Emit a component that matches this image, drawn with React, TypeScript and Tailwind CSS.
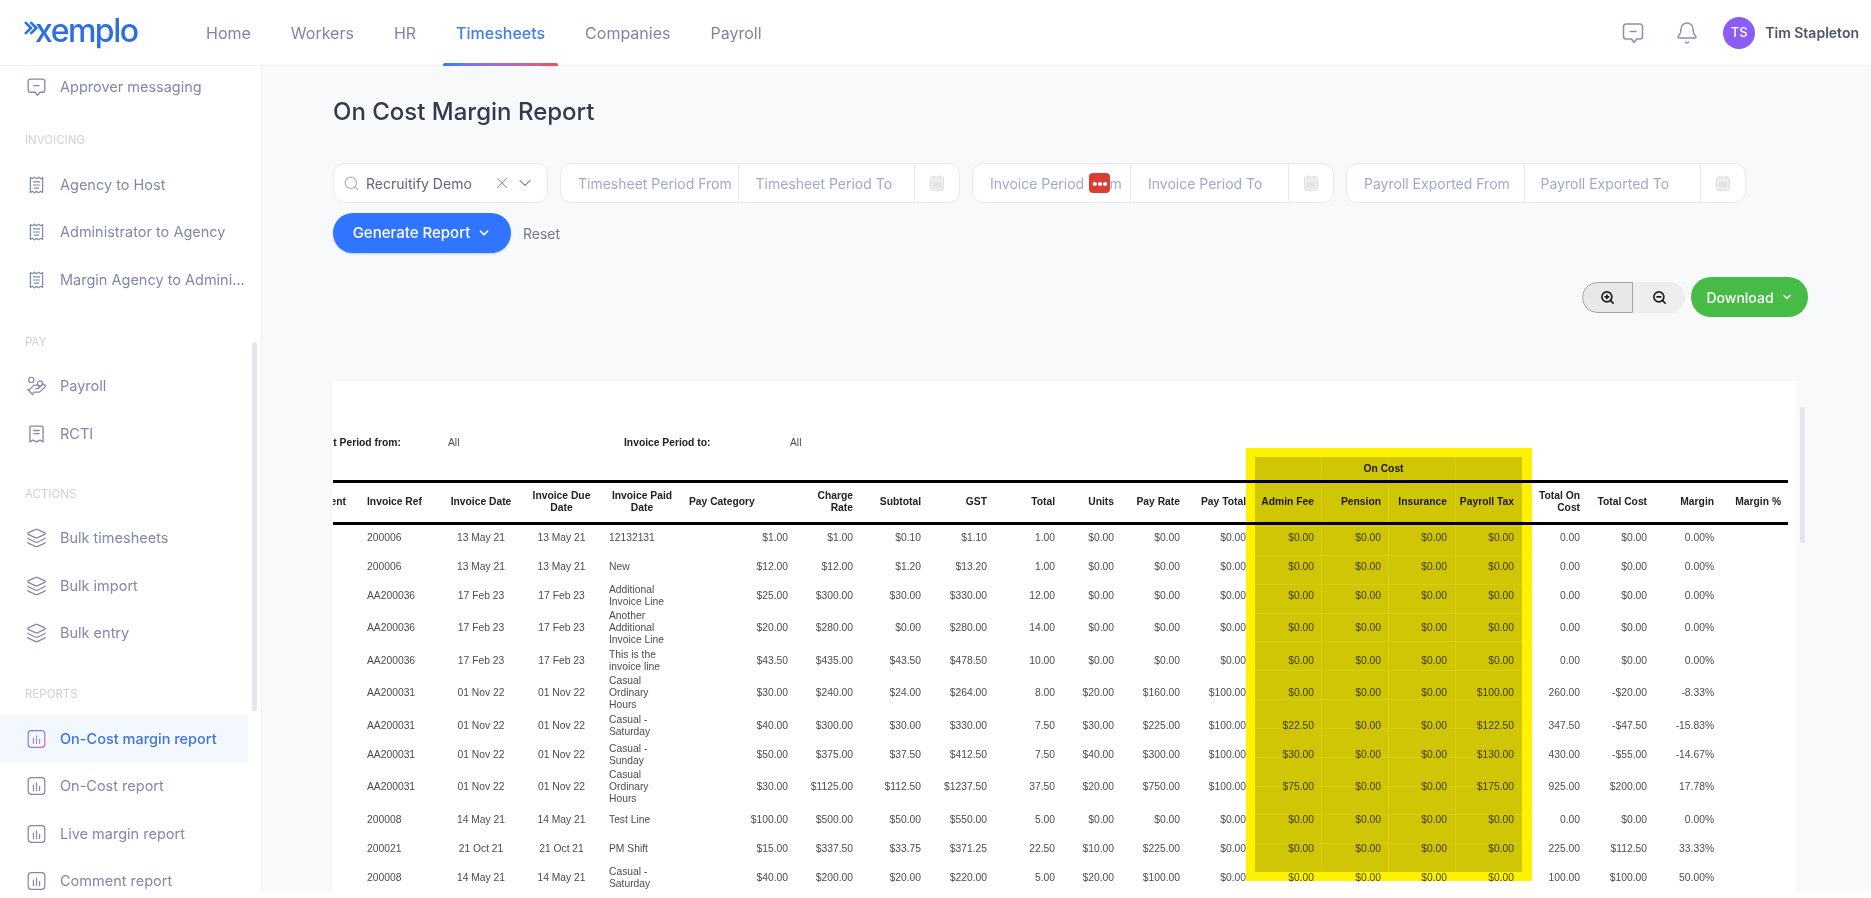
import { Bell, ChevronDown, HandCoins, Layers, Search, X, ZoomIn, ZoomOut } from "lucide-react";

const MessageIcon = ({ className = "" }: { className?: string }) => (
  <svg viewBox="0 0 24 24" fill="none" stroke="currentColor" strokeWidth="1.5" strokeLinejoin="round" strokeLinecap="round" className={className}>
    <path d="M5 3h14a2.5 2.5 0 0 1 2.5 2.5v10A2.5 2.5 0 0 1 19 18h-3.2L13 21.5 10.5 18H5a2.5 2.5 0 0 1-2.5-2.5v-10A2.5 2.5 0 0 1 5 3Z" />
    <path d="M9 10.5h6" />
  </svg>
);

const ClipIcon = () => (
  <svg viewBox="0 0 24 24" fill="none" stroke="currentColor" strokeWidth="1.4" strokeLinejoin="round" strokeLinecap="round" className="h-[24px] w-[24px]">
    <path d="M5 3.5 7.3 4.8 9.6 3 12 4.8 14.4 3l2.3 1.8L19 3.5v17l-2.3-1.3-2.3 1.8-2.4-1.8L9.6 21l-2.3-1.8L5 20.5Z" />
    <path d="M8.5 8.5h7M8.5 12h7M9.5 15.5h5" />
  </svg>
);

const RctiIcon = () => (
  <svg viewBox="0 0 24 24" fill="none" stroke="currentColor" strokeWidth="1.5" strokeLinejoin="round" strokeLinecap="round" className="h-[24px] w-[24px]">
    <path d="M6 3h12a1.5 1.5 0 0 1 1.5 1.5V21l-3.5-2-4 2-4-2-3.5 2V4.500A1.500 1.500 0 0 1 6 3Z" />
    <path d="M9 8h6M9 11.500h6" />
  </svg>
);

const ChartIcon = ({ active = false }: { active?: boolean }) => (
  <svg viewBox="0 0 24 24" fill="none" strokeWidth="1.4" strokeLinecap="round" stroke={active ? "url(#activeChart)" : "currentColor"} className="h-[24px] w-[24px]">
    {active && (
      <defs>
        <linearGradient id="activeChart" x1="0" y1="0" x2="1" y2="1">
          <stop offset="0" stopColor="#5b8cf0" />
          <stop offset="0.6" stopColor="#a07be0" />
          <stop offset="1" stopColor="#f0606a" />
        </linearGradient>
      </defs>
    )}
    <rect x="2.500" y="2.500" width="19" height="19" rx="3.500" stroke={active ? "url(#activeChart)" : "currentColor"} />
    <path d="M8.500 11v6M12 8.500V17M15.500 12.500V17" stroke={active ? "#a78ee0" : "currentColor"} />
  </svg>
);

const CalendarIcon = () => (
  <svg viewBox="0 0 14 16" className="h-[16px] w-[14px]" fill="none">
    <rect x="0.500" y="2" width="13" height="13.500" rx="2" fill="#eceef0" stroke="#dfe1e5" />
    <rect x="3" y="0.500" width="1.500" height="3" fill="#dfe1e5" />
    <rect x="9.500" y="0.500" width="1.500" height="3" fill="#dfe1e5" />
    <rect x="3" y="7" width="8" height="5.500" fill="#e2e4e8" />
  </svg>
);

function NavRow({ label, icon, active = false }: { label: string; icon: React.ReactNode; active?: boolean }) {
  return (
    <div className={`flex h-[47.500px] items-center pl-[26px] text-[14.500px] ${active ? "w-[248px] bg-[#f3f7fe] font-medium text-[#3f74e0]" : "text-[#8288a9]"}`}>
      <span className="mr-[13px] flex w-[21px] items-center justify-center">{icon}</span>
      <span className="whitespace-nowrap">{label}</span>
    </div>
  );
}

const SectionLabel = ({ text, className }: { text: string; className: string }) => (
  <div className={`flex items-end pb-[14px] pl-[25px] text-[11.500px] leading-[14px] text-[#ccd0e0] ${className}`}>{text}</div>
);

const Seg = ({ text, className }: { text: string; className: string }) => (
  <div className={`flex h-full items-center overflow-hidden border-r border-[#e6e8f2] ${className}`}>
    <span className="whitespace-nowrap text-[14px] text-[#a3a9c7]">{text}</span>
  </div>
);

const CalSeg = ({ className }: { className: string }) => (
  <div className={`flex h-full items-center justify-center ${className}`}>
    <CalendarIcon />
  </div>
);

const groupClass = "flex h-full items-center rounded-[11px] border border-[#e8eaf3] bg-white";

const widths = [77, 81, 80, 81, 80, 113, 65, 68, 66, 68, 59, 66, 66, 68, 67, 66, 67, 66, 67, 67, 67];
const heads = [
  "Agent", "Invoice Ref", "Invoice Date", "Invoice Due Date", "Invoice Paid Date", "Pay Category", "Charge Rate", "Subtotal", "GST", "Total", "Units",
  "Pay Rate", "Pay Total", "Admin Fee", "Pension", "Insurance", "Payroll Tax", "Total On Cost", "Total Cost", "Margin", "Margin %",
];

const rows = [
  ["200006", "13 May 21", "13 May 21", "12132131", "$1.00", "$1.00", "$0.10", "$1.10", "1.00", "$0.00", "$0.00", "$0.00", "$0.00", "$0.00", "$0.00", "$0.00", "0.00", "$0.00", "0.00%"],
  ["200006", "13 May 21", "13 May 21", "New", "$12.00", "$12.00", "$1.20", "$13.20", "1.00", "$0.00", "$0.00", "$0.00", "$0.00", "$0.00", "$0.00", "$0.00", "0.00", "$0.00", "0.00%"],
  ["AA200036", "17 Feb 23", "17 Feb 23", "Additional Invoice Line", "$25.00", "$300.00", "$30.00", "$330.00", "12.00", "$0.00", "$0.00", "$0.00", "$0.00", "$0.00", "$0.00", "$0.00", "0.00", "$0.00", "0.00%"],
  ["AA200036", "17 Feb 23", "17 Feb 23", "Another Additional Invoice Line", "$20.00", "$280.00", "$0.00", "$280.00", "14.00", "$0.00", "$0.00", "$0.00", "$0.00", "$0.00", "$0.00", "$0.00", "0.00", "$0.00", "0.00%"],
  ["AA200036", "17 Feb 23", "17 Feb 23", "This is the invoice line", "$43.50", "$435.00", "$43.50", "$478.50", "10.00", "$0.00", "$0.00", "$0.00", "$0.00", "$0.00", "$0.00", "$0.00", "0.00", "$0.00", "0.00%"],
  ["AA200031", "01 Nov 22", "01 Nov 22", "Casual Ordinary Hours", "$30.00", "$240.00", "$24.00", "$264.00", "8.00", "$20.00", "$160.00", "$100.00", "$0.00", "$0.00", "$0.00", "$100.00", "260.00", "-$20.00", "-8.33%"],
  ["AA200031", "01 Nov 22", "01 Nov 22", "Casual - Saturday", "$40.00", "$300.00", "$30.00", "$330.00", "7.50", "$30.00", "$225.00", "$100.00", "$22.50", "$0.00", "$0.00", "$122.50", "347.50", "-$47.50", "-15.83%"],
  ["AA200031", "01 Nov 22", "01 Nov 22", "Casual - Sunday", "$50.00", "$375.00", "$37.50", "$412.50", "7.50", "$40.00", "$300.00", "$100.00", "$30.00", "$0.00", "$0.00", "$130.00", "430.00", "-$55.00", "-14.67%"],
  ["AA200031", "01 Nov 22", "01 Nov 22", "Casual Ordinary Hours", "$30.00", "$1125.00", "$112.50", "$1237.50", "37.50", "$20.00", "$750.00", "$100.00", "$75.00", "$0.00", "$0.00", "$175.00", "925.00", "$200.00", "17.78%"],
  ["200008", "14 May 21", "14 May 21", "Test Line", "$100.00", "$500.00", "$50.00", "$550.00", "5.00", "$0.00", "$0.00", "$0.00", "$0.00", "$0.00", "$0.00", "$0.00", "0.00", "$0.00", "0.00%"],
  ["200021", "21 Oct 21", "21 Oct 21", "PM Shift", "$15.00", "$337.50", "$33.75", "$371.25", "22.50", "$10.00", "$225.00", "$0.00", "$0.00", "$0.00", "$0.00", "$0.00", "225.00", "$112.50", "33.33%"],
  ["200008", "14 May 21", "14 May 21", "Casual - Saturday", "$40.00", "$200.00", "$20.00", "$220.00", "5.00", "$20.00", "$100.00", "$0.00", "$0.00", "$0.00", "$0.00", "$0.00", "100.00", "$100.00", "50.00%"],
];

function headAlign(i: number) {
  if (i === 0) return "text-right pr-[14px]";
  if (i === 1 || i === 5) return "text-left px-[7px]";
  if (i >= 2 && i <= 4) return "text-center px-[4px]";
  return "text-right pr-[7px] pl-[2px]";
}

export default function App() {
  return (
    <div className="relative h-[892px] overflow-hidden bg-[#f8f9fb] font-['Inter',sans-serif] blur-[0.35px]">
      <header className="flex h-[66px] items-center border-b border-[#eef0f5] bg-white">
        <div className="relative flex w-[193px] shrink-0 items-center self-stretch pl-[35px]">
          <svg viewBox="0 0 14 14" className="absolute left-[24px] top-[20px] h-[16px] w-[15px]" fill="none" stroke="#2c6fe0" strokeWidth="2.400">
            <path d="M1 1.500 6.500 7 1 12.500M6 1.500 11.500 7 6 12.500" />
          </svg>
          <span className="pb-[4px] text-[32px] font-medium leading-none tracking-[-1.500px] text-[#2c6fe0]">xemplo</span>
        </div>
        <nav className="flex gap-[14px] self-stretch text-[16px]">
          {["Home", "Workers", "HR", "Timesheets", "Companies", "Payroll"].map((n) => (
            <div key={n} className={`relative flex items-center px-[13px] ${n === "Timesheets" ? "font-medium text-[#3f7ef0]" : "text-[#7f86a5]"}`}>
              {n}
              {n === "Timesheets" && (
                <div className="absolute inset-x-0 bottom-[-1px] h-[3px] rounded-t-[2px] bg-gradient-to-r from-[#2f7df6] via-[#a56cd8] to-[#f04a50]" />
              )}
            </div>
          ))}
        </nav>
        <div className="ml-auto flex items-center pr-[12px]">
          <MessageIcon className="mr-[30px] h-[24px] w-[24px] text-[#8a90b2]" />
          <Bell strokeWidth={1.4} className="mr-[24px] h-[24px] w-[24px] text-[#8a90b2]" />
          <div className="mr-[10px] flex h-[32px] w-[32px] items-center justify-center rounded-full bg-[#8b5cf6] text-[13px] font-medium text-white">TS</div>
          <span className="text-[14px] font-semibold text-[#4f5470]">Tim Stapleton</span>
        </div>
      </header>

      <div className="flex h-[826px]">
        <aside className="relative w-[262px] shrink-0 overflow-hidden border-r border-[#eef0f5] bg-white">
          <div className="flex h-[42px] items-center pl-[26px] text-[14.500px] text-[#8288a9]">
            <span className="mr-[13px] flex w-[21px] justify-center"><MessageIcon className="h-[24px] w-[24px]" /></span>
            Approver messaging
          </div>
          <SectionLabel text="INVOICING" className="h-[53px]" />
          <NavRow label="Agency to Host" icon={<ClipIcon />} />
          <NavRow label="Administrator to Agency" icon={<ClipIcon />} />
          <NavRow label="Margin Agency to Admini..." icon={<ClipIcon />} />
          <SectionLabel text="PAY" className="h-[59px]" />
          <NavRow label="Payroll" icon={<HandCoins strokeWidth={1.4} className="h-[24px] w-[24px]" />} />
          <NavRow label="RCTI" icon={<RctiIcon />} />
          <SectionLabel text="ACTIONS" className="h-[57px]" />
          <NavRow label="Bulk timesheets" icon={<Layers strokeWidth={1.4} className="h-[24px] w-[24px]" />} />
          <NavRow label="Bulk import" icon={<Layers strokeWidth={1.4} className="h-[24px] w-[24px]" />} />
          <NavRow label="Bulk entry" icon={<Layers strokeWidth={1.4} className="h-[24px] w-[24px]" />} />
          <SectionLabel text="REPORTS" className="h-[58px]" />
          <NavRow label="On-Cost margin report" icon={<ChartIcon active />} active />
          <NavRow label="On-Cost report" icon={<ChartIcon />} />
          <NavRow label="Live margin report" icon={<ChartIcon />} />
          <NavRow label="Comment report" icon={<ChartIcon />} />
          <div className="absolute left-[252px] top-[276px] h-[369px] w-[5px] rounded-full bg-[#e6e7ea]" />
        </aside>

        <main className="relative min-w-0 flex-1 pl-[71px] pt-[30px]">
          <h1 className="text-[24px] font-medium leading-[32px] text-[#343a4d]">On Cost Margin Report</h1>

          <div className="mt-[35px] flex h-[40px] gap-[12px]">
            <div className={`${groupClass} w-[215px]`}>
              <Search strokeWidth={1.6} className="ml-[9px] mr-[6px] h-[17px] w-[17px] text-[#b0b0b4]" />
              <span className="whitespace-nowrap text-[14px] text-[#62667a]">Recruitify Demo</span>
              <X strokeWidth={1.4} className="ml-[21px] h-[18px] w-[18px] text-[#8a90b2]" />
              <ChevronDown strokeWidth={1.4} className="ml-[4px] h-[20px] w-[20px] text-[#8a90b2]" />
            </div>
            <div className={`${groupClass} w-[400px]`}>
              <Seg text="Timesheet Period From" className="w-[178px] pl-[17px] pr-[16px]" />
              <Seg text="Timesheet Period To" className="w-[177px] pl-[17px] pr-[16px]" />
              <CalSeg className="w-[44px]" />
            </div>
            <div className={`${groupClass} relative w-[362px]`}>
              <Seg text="Invoice Period From" className="w-[158px] pl-[17px] pr-[18px]" />
              <Seg text="Invoice Period To" className="w-[158px] pl-[17px] pr-[16px]" />
              <CalSeg className="w-[44px]" />
              <div className="absolute left-[116px] top-[9px] flex h-[20px] w-[21px] items-center justify-center rounded-[4px] bg-[#db3c34] text-[13px] font-bold leading-none tracking-[-1px] text-white">•••</div>
            </div>
            <div className={`${groupClass} w-[400px]`}>
              <Seg text="Payroll Exported From" className="w-[178px] pl-[17px] pr-[16px]" />
              <Seg text="Payroll Exported To" className="w-[177px] pl-[16px] pr-[16px]" />
              <CalSeg className="w-[44px]" />
            </div>
          </div>

          <div className="mt-[10px] flex h-[40px] items-center">
            <button className="flex h-[40px] w-[178px] items-center justify-center gap-[7px] rounded-full bg-[#2f75ff] text-[15px] font-medium text-white shadow-[0_1px_2px_rgba(47,117,255,0.3)]">
              Generate Report
              <ChevronDown strokeWidth={3} className="h-[14px] w-[14px]" />
            </button>
            <span className="ml-[12px] text-[14px] text-[#77787f]">Reset</span>
          </div>

          <div className="mt-[24px] flex h-[40px] items-center justify-end pr-[63px]">
            <div className="flex h-[31px] w-[103px] overflow-hidden rounded-full bg-[#eeeeee]">
              <div className="flex w-[51px] items-center justify-center rounded-l-full border border-[#a3a3a3] bg-[#e8e8e8]">
                <ZoomIn strokeWidth={2.6} className="h-[15px] w-[15px] text-[#1c1c1c]" />
              </div>
              <div className="flex flex-1 items-center justify-center">
                <ZoomOut strokeWidth={2.6} className="h-[15px] w-[15px] text-[#1c1c1c]" />
              </div>
            </div>
            <button className="ml-[6px] flex h-[40px] w-[117px] items-center justify-center gap-[7px] rounded-full bg-[#46bb45] text-[14px] font-medium text-white">
              Download
              <ChevronDown strokeWidth={3} className="h-[12px] w-[12px]" />
            </button>
          </div>

          <div className="mt-[64px] h-[511px] w-[1463px]">
            <div className="relative h-full overflow-hidden bg-white font-['Liberation_Sans',Arial,sans-serif] text-[10.300px] text-[#4c4c4c]">
              <div className="ml-[-50px] w-[1530px] pt-[56px]">
                <div className="flex h-[12px] items-center leading-[12px]">
                  <b className="w-[131px] whitespace-nowrap pl-[3px] font-bold text-[#222222]">Timesheet Period from:</b>
                  <span className="ml-[34px] w-[176px]">All</span>
                  <b className="w-[166px] font-bold text-[#222222]">Invoice Period to:</b>
                  <span>All</span>
                </div>
                <table className="mt-[8px] table-fixed border-collapse" style={{ width: widths.reduce((a, b) => a + b, 0) }}>
                  <colgroup>
                    {widths.map((w, i) => (
                      <col key={i} style={{ width: w }} />
                    ))}
                  </colgroup>
                  <thead>
                    <tr className="h-[24px] font-bold text-[#222222]">
                      <th colSpan={13} />
                      <th colSpan={4} className="pr-[7px] text-center text-[10.300px] font-bold">On Cost</th>
                      <th colSpan={4} />
                    </tr>
                    <tr className="h-[42px] border-y-[3px] border-black leading-[12px] text-[#222222]">
                      {heads.map((h, i) => (
                        <th key={h} className={`font-bold ${headAlign(i)}`}>{h}</th>
                      ))}
                    </tr>
                  </thead>
                  <tbody>
                    {rows.map((r, ri) => (
                      <tr key={ri} className="h-[29px] leading-[12px]">
                        <td />
                        {r.map((c, i) => (
                          <td key={i} className={i === 0 || i === 3 ? "px-[7px] text-left" : i === 1 || i === 2 ? "text-center" : i === 4 || i > 4 ? (i === 4 ? "pr-[7px] text-right" : "pr-[7px] text-right") : ""}>{c}</td>
                        ))}
                        {ri < 0 && <td />}
                      </tr>
                    ))}
                  </tbody>
                </table>
              </div>

              <div className="pointer-events-none absolute left-[913px] top-[67px] h-[433px] w-[286px] bg-[#fff200] p-[9px] mix-blend-multiply">
                <div className="grid h-[415px] w-[267px] grid-cols-4 grid-rows-[69px_repeat(12,1fr)] gap-px bg-[#d8ce10]">
                  {Array.from({ length: 52 }).map((_, i) => (
                    <div key={i} className="bg-[#d1c605]" />
                  ))}
                </div>
              </div>
            </div>
          </div>

          <div className="absolute left-[1538px] top-[341px] h-[136px] w-[5px] rounded-full bg-[#e5e6ea]" />
        </main>
      </div>
    </div>
  );
}
